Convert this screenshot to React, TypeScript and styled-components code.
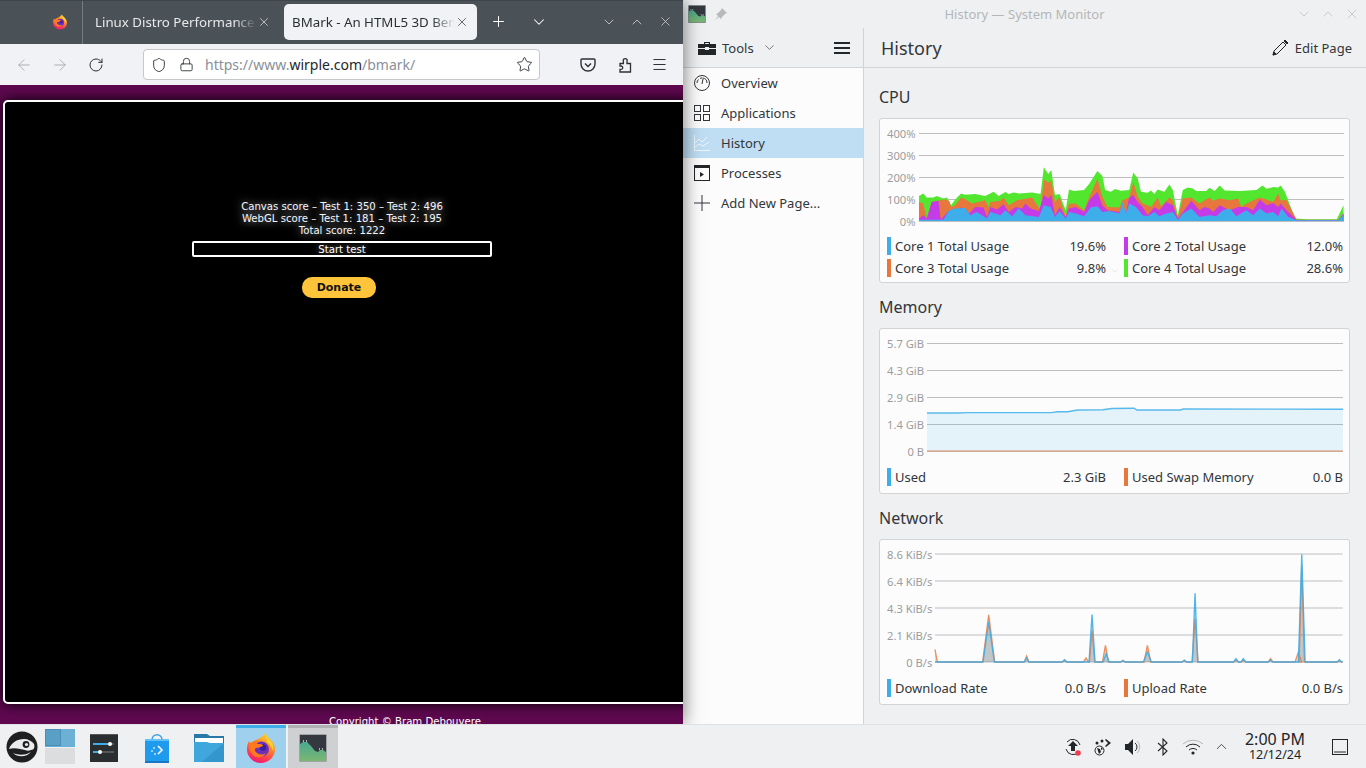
import React from "react";
import styled, { createGlobalStyle } from "styled-components";
import { ArrowLeft, ArrowRight, ChevronDown, ChevronUp, Lock, Menu, Plus, RotateCw, Shield, Star, X } from "lucide-react";

const GlobalStyle = createGlobalStyle`
  html, body { margin: 0; padding: 0; height: 100%; overflow: hidden; }
  body { font-family: "Noto Sans", sans-serif; font-size: 13px; color: #31363b; background: #000; }
  * { box-sizing: border-box; }
`;

// chart data is traced from the screenshot, in 3x crop coordinates
const parse = (s: string) => s.trim().split(/\s+/).map((p) => p.split(",").map(Number));

const GREEN = "132,258 145,250 155,262 175,262 185,258 205,265 215,262 228,285 240,268 258,250 270,254 300,252 330,258 355,245 370,258 390,246 400,252 415,247 430,250 470,247 495,252 505,172 518,192 527,180 538,255 552,252 570,300 580,238 595,243 625,240 640,222 665,183 680,198 688,240 705,245 718,237 735,242 760,240 772,188 785,205 795,245 815,248 825,241 835,252 845,238 865,245 880,223 890,240 905,315 920,240 935,232 950,235 960,243 990,243 1000,233 1015,243 1030,226 1045,241 1090,243 1140,240 1158,226 1170,236 1190,231 1205,232 1212,226 1225,245 1255,325 1290,327 1380,327 1400,285";
const ORANGE = "132,275 145,280 155,325 170,275 190,272 205,268 222,272 228,290 240,285 258,262 272,268 290,280 330,270 340,292 345,275 375,272 385,262 400,285 425,270 470,262 495,300 505,208 518,218 527,212 538,275 552,262 570,318 580,280 600,280 625,300 640,262 665,206 680,260 695,290 730,292 740,270 760,262 772,216 785,260 800,280 815,285 825,290 845,262 855,288 880,262 890,270 905,322 920,265 945,262 970,280 985,270 1000,262 1010,272 1030,265 1060,270 1085,265 1095,290 1110,280 1150,262 1170,268 1190,275 1205,250 1212,270 1230,270 1260,328 1385,328 1400,310";
const PURPLE = "132,325 145,315 155,325 170,275 190,272 197,328 222,300 240,300 258,292 272,296 282,310 300,290 325,292 335,320 345,290 365,298 385,282 400,305 420,290 440,295 450,280 465,295 490,302 505,255 518,265 527,255 538,315 552,290 570,320 580,295 600,290 625,305 640,270 665,245 680,285 695,300 730,305 740,285 750,310 760,262 772,255 785,275 800,290 815,315 835,290 850,300 870,275 890,285 905,325 920,305 945,272 970,300 985,290 1000,295 1010,305 1030,285 1060,300 1085,290 1110,290 1130,300 1150,268 1170,285 1190,278 1205,290 1212,280 1230,300 1260,329 1385,329 1400,310";
const BLUE = "132,328 205,328 222,300 240,295 270,293 285,315 305,305 335,325 345,305 375,315 390,300 410,318 430,295 450,315 490,320 505,285 525,290 538,320 552,302 570,325 580,305 600,310 625,318 645,292 665,288 680,305 700,302 730,310 740,275 750,310 760,280 780,290 800,315 815,318 835,305 850,318 870,310 890,305 905,328 920,310 945,295 970,320 1000,315 1020,318 1040,300 1060,295 1080,318 1110,300 1130,315 1150,295 1170,310 1190,305 1205,318 1215,295 1235,320 1260,330 1385,330 1400,315";
const MEMORY = "0,70 30,70 40,69.6 124,69.6 130,68.7 140,68.7 150,67 175,66.8 184,65.5 206,65.2 209,67 252,67 255,66 414,66.3";

const toPlot = (pts: number[][], x0: number, x1: number, y0: number, y1: number) =>
  pts.map(([x, y]) => `${(((x - x0) / (x1 - x0)) * 424).toFixed(1)},${(((y - y0) / (y1 - y0)) * 88).toFixed(1)}`).join(" ");

const cpuArea = (s: string) => `${toPlot(parse(s), 132, 1400, 70, 332)} 424,88 0,88`;

// [x, height, half width] peaks in crop coords, baseline y=368
const spikes = (peaks: number[][], first: number) => {
  const pts: string[] = [`185,${368 - first}`, "192,368"];
  peaks.forEach(([x, h, half]) => {
    const hw = half ?? 7;
    pts.push(`${x - hw},368`, `${x},${368 - h}`, `${x + hw},368`);
  });
  pts.push("1400,368");
  return pts.join(" ");
};
const NET_BLUE: number[][] = [[345, 120, 17], [458, 12], [571, 7], [653, 143, 9], [695, 25, 9], [745, 4], [818, 30, 12], [928, 6], [960, 207, 8], [1082, 10], [1104, 10], [1185, 6], [1278, 324, 10], [1390, 7]];
const NET_ORANGE: number[][] = [[345, 142, 18], [458, 18], [571, 5], [635, 12, 8], [653, 95, 8], [693, 50, 9], [745, 5], [818, 50, 10], [928, 4], [960, 130, 9], [1082, 6], [1104, 6], [1185, 10], [1268, 30, 10], [1278, 290, 8], [1390, 3]];

const Desktop = styled.div`
  width: 1366px;
  height: 768px;
  display: flex;
  flex-direction: column;
  overflow: hidden;
`;
const Windows = styled.div`
  flex: 1;
  min-height: 0;
  display: flex;
`;
const Browser = styled.div`
  width: 683px;
  flex: none;
  display: flex;
  flex-direction: column;
  position: relative;
  z-index: 2;
  box-shadow: 0 0 18px rgba(0, 0, 0, 0.55);
`;
const TabBar = styled.div`
  height: 44px;
  flex: none;
  background: #4a5258;
  border-top: 1px solid #3e464c;
  display: flex;
  align-items: center;
  color: #fff;
`;
const TabIconSlot = styled.div`
  width: 83px;
  align-self: stretch;
  flex: none;
  border-right: 1px solid #767c81;
  display: flex;
  align-items: center;
  justify-content: flex-end;
  padding: 0 14px 2px 0;
`;
const Tab = styled.div<{ $active?: boolean }>`
  width: ${(p) => (p.$active ? 193 : 201)}px;
  height: 36px;
  flex: none;
  margin-top: -2px;
  display: flex;
  align-items: center;
  border-radius: 5px;
  padding: 0 8px 0 ${(p) => (p.$active ? 8 : 12)}px;
  background: ${(p) => (p.$active ? "#f0f2f5" : "transparent")};
  color: ${(p) => (p.$active ? "#2c3034" : "#e6e8ea")};
`;
const TabTitle = styled.span`
  flex: 1;
  overflow: hidden;
  white-space: nowrap;
  font-size: 13.3px;
  -webkit-mask-image: linear-gradient(to right, #000 86%, transparent);
  mask-image: linear-gradient(to right, #000 86%, transparent);
`;
const TabButton = styled.div<{ $w: number }>`
  width: ${(p) => p.$w}px;
  flex: none;
  display: flex;
  justify-content: center;
  align-items: center;
  margin-top: -2px;
`;
const BrowserControls = styled.div`
  margin-left: auto;
  padding-right: 4px;
  display: flex;
  color: #dfe2e4;
`;
const NavBar = styled.div`
  height: 41px;
  flex: none;
  background: #f0f2f5;
  display: flex;
  align-items: center;
  padding-left: 14px;
  color: #2c3034;
`;
const NavIcon = styled.div<{ $w?: number; $muted?: boolean; $ml?: number; $mr?: number }>`
  width: ${(p) => p.$w ?? 36}px;
  flex: none;
  margin-left: ${(p) => p.$ml ?? 0}px;
  margin-right: ${(p) => p.$mr ?? 0}px;
  display: flex;
  justify-content: center;
  align-items: center;
  color: ${(p) => (p.$muted ? "#a0a4a8" : "#2c3034")};
`;
const UrlBar = styled.div`
  width: 397px;
  height: 31px;
  flex: none;
  margin-left: 37px;
  margin-right: 29px;
  background: #fff;
  border: 1px solid #c5c7c9;
  border-radius: 4px;
  display: flex;
  align-items: center;
  padding: 0 6px 0 5px;
`;
const UrlText = styled.span`
  flex: 1;
  font-size: 14px;
  color: #8a9099;
  white-space: nowrap;
  b { font-weight: 400; color: #23272b; }
`;
const WebPage = styled.div`
  flex: 1;
  min-height: 0;
  background: #5f0850;
  padding: 15px 0 0 3px;
  overflow: hidden;
`;
const Canvas = styled.div`
  width: 690px;
  height: 604px;
  background: #000;
  border: 2px solid #fff;
  border-radius: 5px;
  box-shadow: 0 0 14px #000;
  padding: 99px 0 0 187px;
  display: flex;
  flex-direction: column;
  font-family: "DejaVu Sans", sans-serif;
  color: #fff;
`;
const Scores = styled.div`
  width: 300px;
  font-size: 10.15px;
  line-height: 12px;
  text-align: center;
  color: #f4f6ff;
  text-shadow: 0 0 8px rgba(255, 255, 255, 0.75);
`;
const StartButton = styled.div`
  width: 300px;
  height: 16px;
  margin-top: 4px;
  border: 2px solid #fff;
  border-radius: 2px;
  font-size: 10.15px;
  line-height: 13px;
  text-align: center;
  text-shadow: 0 0 6px rgba(255, 255, 255, 0.6);
`;
const Donate = styled.div`
  width: 74px;
  height: 21px;
  margin: 20px 0 0 110px;
  background: #ffc439;
  border-radius: 10px;
  color: #111;
  font-size: 11px;
  font-weight: 700;
  line-height: 22px;
  text-align: center;
`;
const Copyright = styled.div`
  margin: 12px 0 0 326px;
  font-size: 10.15px;
  color: #fff;
  font-family: "DejaVu Sans", sans-serif;
  white-space: nowrap;
`;

const Monitor = styled.div`
  flex: 1;
  min-width: 0;
  background: #eff0f1;
  display: flex;
  flex-direction: column;
`;
const TitleBar = styled.div`
  height: 28px;
  flex: none;
  display: flex;
  align-items: center;
  padding: 0 0 0 5px;
  color: #b4b7b9;
`;
const TitleText = styled.div`
  flex: 1;
  text-align: center;
  font-size: 13px;
  padding-left: 26px;
`;
const WinControls = styled.div`
  display: flex;
  gap: 8px;
  padding-right: 6px;
  color: #b4b7b9;
`;
const MonitorBody = styled.div`
  flex: 1;
  min-height: 0;
  display: flex;
`;
const Sidebar = styled.div`
  width: 181px;
  flex: none;
  background: #fcfcfc;
  border-right: 1px solid #d2d3d5;
  display: flex;
  flex-direction: column;
`;
const SideTools = styled.div`
  height: 40px;
  flex: none;
  background: #eff0f1;
  border-bottom: 1px solid #d2d3d5;
  display: flex;
  align-items: center;
  padding: 0 13px 0 15px;
  gap: 6px;
  font-size: 13px;
`;
const NavItem = styled.div<{ $active?: boolean }>`
  height: 30px;
  flex: none;
  display: flex;
  align-items: center;
  gap: 11px;
  padding-left: 11px;
  font-size: 13px;
  background: ${(p) => (p.$active ? "#bfdef3" : "transparent")};
`;
const Main = styled.div`
  flex: 1;
  min-width: 0;
  display: flex;
  flex-direction: column;
`;
const MainHeader = styled.div`
  height: 40px;
  flex: none;
  border-bottom: 1px solid #d2d3d5;
  display: flex;
  align-items: center;
  justify-content: space-between;
  padding: 0 14px 0 17px;
`;
const PageTitle = styled.div`
  font-size: 18px;
`;
const EditPage = styled.div`
  display: flex;
  align-items: center;
  gap: 7px;
  font-size: 13px;
`;
const Sections = styled.div`
  flex: 1;
  padding: 18px 16px 0 15px;
  display: flex;
  flex-direction: column;
`;
const SectionTitle = styled.div`
  height: 22px;
  line-height: 22px;
  font-size: 16px;
  margin-bottom: 10px;
`;
const Card = styled.div<{ $pb: number }>`
  background: #fcfcfc;
  border: 1px solid #d2d3d5;
  border-radius: 3px;
  padding: 6px 6px ${(p) => p.$pb}px 7px;
  margin-bottom: 13px;
  position: relative;
`;
const ChartRow = styled.div<{ $h: number }>`
  height: ${(p) => p.$h}px;
  display: flex;
  gap: 3px;
`;
const Axis = styled.div`
  margin: 1px 0 -1px;
  display: flex;
  flex-direction: column;
  justify-content: space-between;
  align-items: flex-end;
  flex: none;
  font-size: 11.2px;
  line-height: 16px;
  color: #9a9c9f;
`;
const Plot = styled.div`
  flex: 1;
  min-width: 0;
  padding: 8px 0;
  svg { display: block; width: 100%; height: 100%; overflow: visible; }
`;
const Legend = styled.div<{ $mt: number }>`
  margin-top: ${(p) => p.$mt}px;
  display: grid;
  grid-template-columns: 219px 219px;
  column-gap: 18px;
  grid-auto-rows: 22px;
`;
const LegendItem = styled.div`
  display: flex;
  align-items: center;
  font-size: 13px;
  justify-content: space-between;
`;
const LegendName = styled.span<{ $color: string }>`
  display: flex;
  align-items: center;
  gap: 4px;
  &::before {
    content: "";
    width: 4px;
    height: 18px;
    background: ${(p) => p.$color};
  }
`;
const TinyChevron = styled.div`
  position: absolute;
  left: 230px;
  bottom: 6px;
  color: #c4c6c8;
  display: flex;
`;

const Taskbar = styled.div`
  height: 44px;
  flex: none;
  background: #eff0f1;
  border-top: 1px solid #dfe0e2;
  display: flex;
  align-items: stretch;
  position: relative;
  z-index: 3;
`;
const Launcher = styled.div`
  width: 44px;
  flex: none;
  display: flex;
  align-items: center;
  justify-content: center;
`;
const Pager = styled.div`
  width: 30px;
  flex: none;
  margin: 4px 0 4px 1px;
  display: grid;
  grid-template-rows: 1fr 1fr;
`;
const PagerTop = styled.div`
  display: flex;
  border-bottom: 1px solid #64b0d8;
  background: #6db0d6;
`;
const PagerWin = styled.div`
  width: 16px;
  background: #5a9fc6;
  border: 1px solid #4b8db3;
`;
const PagerBottom = styled.div`
  background: #dcdddf;
  margin-top: 1px;
`;
const TaskSlot = styled.div<{ $w: number; $bg?: string; $bar?: string; $ml?: number }>`
  width: ${(p) => p.$w}px;
  flex: none;
  margin-left: ${(p) => p.$ml ?? 0}px;
  display: flex;
  align-items: center;
  justify-content: center;
  background: ${(p) => p.$bg ?? "transparent"};
  border-top: 3px solid ${(p) => p.$bar ?? "transparent"};
`;
const Tray = styled.div`
  margin-left: auto;
  display: flex;
  align-items: center;
  color: #232629;
`;
const TrayIcon = styled.div<{ $w: number }>`
  width: ${(p) => p.$w}px;
  flex: none;
  display: flex;
  justify-content: center;
`;
const Clock = styled.div`
  width: 78px;
  margin-left: 2px;
  text-align: center;
  color: #232629;
`;
const ClockTime = styled.div`
  font-size: 16px;
  line-height: 17px;
`;
const ClockDate = styled.div`
  font-size: 12.5px;
  line-height: 14px;
`;
const ShowDesktop = styled.div`
  width: 52px;
  flex: none;
  display: flex;
  justify-content: center;
`;
const IconWrap = styled.span<{ $ml?: number }>`
  display: flex;
  margin-left: ${(p) => (p.$ml === undefined ? "auto" : `${p.$ml}px`)};
`;

const Firefox = ({ size, id }: { size: number; id: string }) => (
  <svg width={size} height={size} viewBox="0 0 32 32">
    <defs>
      <linearGradient id={`${id}a`} x1="0.7" y1="0" x2="0.3" y2="1">
        <stop offset="0" stopColor="#ffd52e" />
        <stop offset="0.4" stopColor="#ff8a2a" />
        <stop offset="0.8" stopColor="#ff3256" />
        <stop offset="1" stopColor="#e9197c" />
      </linearGradient>
    </defs>
    <path d="M20 1c1 3 3 4 5 6 3 3 5 6 5 11a14 14 0 1 1-28-2c0-3 1-5 2-7 1 1 1 2 2 3 1-2 3-3 5-4 2-1 6-3 9-7z" fill={`url(#${id}a)`} />
    <circle cx="16.5" cy="17" r="7.5" fill="#6b2fb8" />
    <circle cx="18" cy="15.5" r="3.2" fill="#3a1f9c" />
    <path d="M4 12c3-3 7-4 11-3-2 1-3 2-3 3 3 0 6 0 6 2-3 1-5 2-7 2-2 1-1 4 1 5 3 2 6 2 9 0-2 4-8 6-12 3-3-2-5-7-5-12z" fill="#ff7a1f" />
    <path d="M21 3c1 3 4 5 6 8 1 2 2 5 1 8-1-4-3-7-6-9 0-2-1-4-1-7z" fill="#ffd52e" />
  </svg>
);

const MonitorIcon = ({ size }: { size: number }) => (
  <svg width={size} height={size} viewBox="0 0 28 28">
    <defs>
      <linearGradient id={`sm${size}`} x1="0" y1="0" x2="0" y2="1">
        <stop offset="0" stopColor="#48a98f" />
        <stop offset="1" stopColor="#7cb672" />
      </linearGradient>
    </defs>
    <rect x="0.5" y="0.5" width="27" height="27" rx="1" fill="#33393e" stroke="#a0a4a7" strokeWidth="1" />
    <path d="M1 27V10l3-2h4l4 4 4 5 3 1 2-2h3l3 2v9z" fill={`url(#sm${size})`} />
    <path d="M4 7h1M7 7h1M20 15h1M23 15h1" stroke="#d6dadd" strokeWidth="1.5" />
  </svg>
);

const Suse = () => (
  <svg width="32" height="32" viewBox="0 0 32 32">
    <circle cx="16" cy="16" r="15.5" fill="#1d1f21" />
    <path d="M3 18c2-6 8-10 15-10 4 0 8 2 10 5 1 3 0 6-3 6-2 1-4 1-6 0l-5-1c-4-1-8-1-11 0z" fill="#ececec" />
    <circle cx="20" cy="13.5" r="3.4" fill="#1d1f21" />
    <circle cx="20.5" cy="13.5" r="1.6" fill="#ececec" />
    <path d="M7 22c5 2 11 3 18-1-4 5-13 6-18 1z" fill="#ececec" />
  </svg>
);

const SettingsIcon = () => (
  <svg width="28" height="28" viewBox="0 0 28 28">
    <rect width="28" height="28" fill="#2b2e31" />
    <rect width="28" height="1" fill="#55585b" />
    <rect x="3" y="9" width="21" height="2" fill="#55585b" />
    <rect x="3" y="9" width="17" height="2" fill="#3daee9" />
    <circle cx="20" cy="10" r="2" fill="#fff" />
    <rect x="3" y="17" width="21" height="2" fill="#55585b" />
    <rect x="3" y="17" width="7" height="2" fill="#3daee9" />
    <circle cx="10" cy="18" r="2" fill="#fff" />
  </svg>
);

const DiscoverIcon = () => (
  <svg width="26" height="30" viewBox="0 0 26 30">
    <path d="M8 7c0-7 10-7 10 0" fill="none" stroke="#3aa0e0" strokeWidth="1.5" />
    <rect x="1" y="6" width="24" height="24" fill="#1f9bee" />
    <rect x="1" y="6" width="24" height="2" fill="#63c0f5" />
    <rect x="1" y="28" width="24" height="2" fill="#1878c4" />
    <path d="M14 13l4 4-4 4" fill="none" stroke="#fff" strokeWidth="1.6" />
    <circle cx="10" cy="15" r="1" fill="#bfe6ff" />
    <circle cx="8" cy="18" r="1" fill="#bfe6ff" />
    <circle cx="11" cy="21" r="1" fill="#bfe6ff" />
  </svg>
);

const FolderIcon = () => (
  <svg width="30" height="30" viewBox="0 0 30 30">
    <path d="M0 1h13l3 2h14v26H0z" fill="#2a78a8" />
    <rect x="1" y="5" width="28" height="5" fill="#fff" />
    <path d="M0 29V9h13l3 1h14v19z" fill="#3fa7dc" />
    <path d="M30 10v19H8z" fill="#2f8fc4" opacity="0.7" />
  </svg>
);

const thin = { fill: "none", stroke: "currentColor", strokeWidth: 1 } as const;

const ToolboxIcon = () => (
  <svg width="18" height="14" viewBox="0 0 18 14" fill="#232629">
    <path d="M6 3V1h6v2h-1.2V2H7.2v1z" />
    <path d="M0 3h18v4H11V6H7v1H0zM0 8h7v1h4V8h7v6H0z" />
  </svg>
);
const OverviewIcon = () => (
  <svg width="16" height="16" viewBox="0 0 16 16" {...thin}>
    <circle cx="8" cy="8" r="7.5" />
    <path d="M3 8a5 5 0 0 1 1.5-3.5M6 3.4A5 5 0 0 1 8 3M8.5 3A5 5 0 0 1 13 8M8 9l1-5" />
  </svg>
);
const AppsIcon = () => (
  <svg width="16" height="16" viewBox="0 0 16 16" {...thin}>
    <rect x="0.5" y="0.5" width="6" height="6" />
    <rect x="9.5" y="0.5" width="6" height="6" />
    <rect x="0.5" y="9.5" width="6" height="6" />
    <rect x="9.5" y="9.5" width="6" height="6" />
  </svg>
);
const HistoryIcon = () => (
  <svg width="16" height="16" viewBox="0 0 16 16" fill="none" stroke="#eef5fa" strokeWidth="1">
    <path d="M0.5 0v15.5H16M1 8l4-4 3 3 5-5M1 12l4-3 4 2 6-4" />
  </svg>
);
const ProcessesIcon = () => (
  <svg width="16" height="16" viewBox="0 0 16 16">
    <rect x="0.5" y="0.5" width="15" height="15" fill="none" stroke="#232629" />
    <rect x="0" y="0" width="16" height="3" fill="#232629" />
    <path d="M6 7l4 2.5L6 12z" fill="#232629" />
  </svg>
);
const PlusIcon = () => (
  <svg width="16" height="16" viewBox="0 0 16 16" {...thin}>
    <path d="M8 0v16M0 8h16" />
  </svg>
);
const Hamburger = () => (
  <svg width="16" height="12" viewBox="0 0 16 12" fill="#232629">
    <rect width="16" height="2" />
    <rect y="5" width="16" height="2" />
    <rect y="10" width="16" height="2" />
  </svg>
);
const Pin = () => (
  <svg width="12" height="12" viewBox="0 0 12 12" fill="#b7babc">
    <path d="M7 0l5 5-2 1-3 3-1 2-5-5 2-1 3-3z" />
    <path d="M3 8l-3 4 4-3z" />
  </svg>
);
const Pencil = () => (
  <svg width="16" height="16" viewBox="0 0 16 16" fill="none" stroke="#232629">
    <path d="M1 15l1-4L11 2l3 3-9 9z" />
    <path d="M12 1l3 3 1-1-3-3z" fill="#232629" />
    <path d="M1 15l1-3 2 2z" fill="#232629" />
  </svg>
);
const Pocket = () => (
  <svg width="16" height="16" viewBox="0 0 16 16" fill="none" stroke="#2c3034" strokeWidth="1.4">
    <path d="M2 2h12a1 1 0 0 1 1 1v4a7 7 0 0 1-14 0V3a1 1 0 0 1 1-1z" />
    <path d="M5 6.5l3 3 3-3" />
  </svg>
);
const Extension = () => (
  <svg width="16" height="16" viewBox="0 0 16 16" fill="none" stroke="#2c3034" strokeWidth="1.3">
    <path d="M3 15h10.5V6.5H10V4.4a2 2 0 1 0-3.6 0v2.1H3V9h1a1.7 1.7 0 1 1 0 3.4H3z" />
  </svg>
);
const TrayUpdate = () => (
  <svg width="18" height="18" viewBox="0 0 18 18">
    <path d="M3 4A7.5 7.5 0 0 1 16 7M15 14A7.5 7.5 0 0 1 2 11" fill="none" stroke="#232629" />
    <path d="M9 3l5 5h-3v5H7V8H4z" fill="#232629" />
    <circle cx="14" cy="15" r="2.8" fill="#ed3e4f" />
  </svg>
);
const TrayConnect = () => (
  <svg width="18" height="18" viewBox="0 0 18 18" fill="#232629">
    <circle cx="5.5" cy="12.5" r="4.5" fill="none" stroke="#232629" />
    <path d="M3 10l3 1 1 3-2 2-1-3zM7 9l2 2-2 1z" />
    <circle cx="3" cy="5" r="1.5" />
    <circle cx="8" cy="3" r="1.5" />
    <path d="M12 1l5 4-5 4 -1-1 3-3-3-3z" />
  </svg>
);
const TrayVolume = () => (
  <svg width="18" height="18" viewBox="0 0 18 18">
    <path d="M1 6h3l5-5v16l-5-5H1z" fill="#232629" />
    <path d="M11 5a5 5 0 0 1 0 8" fill="none" stroke="#232629" />
    <path d="M13 3a8 8 0 0 1 0 12" fill="none" stroke="#b4b6b8" />
  </svg>
);
const TrayBluetooth = () => (
  <svg width="12" height="18" viewBox="0 0 12 18" fill="none" stroke="#232629" strokeWidth="1.1">
    <path d="M1 5l9 8-4 4V1l4 4-9 8" />
  </svg>
);
const TrayWifi = () => (
  <svg width="22" height="16" viewBox="0 0 22 16" fill="none">
    <path d="M1 5a15 15 0 0 1 20 0" stroke="#b4b6b8" />
    <path d="M4 8a10 10 0 0 1 14 0M7 11a6 6 0 0 1 8 0" stroke="#232629" />
    <circle cx="11" cy="14" r="1.6" fill="#232629" />
  </svg>
);
const ShowDesktopIcon = () => (
  <svg width="16" height="16" viewBox="0 0 16 16" {...thin} stroke="#232629">
    <rect x="0.5" y="0.5" width="15" height="15" />
    <path d="M2 13h12" />
  </svg>
);

const Grid = ({ lines, x0, w, y0, h, sw }: { lines: number; x0: number; w: number; y0: number; h: number; sw: number }) => (
  <g shapeRendering="crispEdges">
    {Array.from({ length: lines }).map((_, i) => {
      const y = y0 + (h / (lines - 1)) * i;
      return <line key={i} x1={x0} x2={x0 + w} y1={y} y2={y} stroke="#bcbec0" strokeWidth={sw} />;
    })}
  </g>
);

const CpuPlot = () => (
  <svg viewBox="0 0 424 88" preserveAspectRatio="none">
    <Grid lines={5} x0={0} w={424} y0={0} h={88} sw={1} />
    <polygon points={cpuArea(GREEN)} fill="#52e62f" />
    <polygon points={cpuArea(ORANGE)} fill="#e8773d" />
    <polygon points={cpuArea(PURPLE)} fill="#c63be8" />
    <polygon points={cpuArea(BLUE)} fill="#3daee9" />
  </svg>
);

const MemoryPlot = () => (
  <svg viewBox="0 0 414 108" preserveAspectRatio="none">
    <Grid lines={5} x0={0} w={414} y0={0} h={108} sw={1} />
    <polygon points={`${MEMORY} 414,108 0,108`} fill="rgba(61,174,233,0.12)" />
    <polyline points={MEMORY} fill="none" stroke="#3daee9" strokeWidth="1.4" opacity="0.85" />
    <line x1={0} x2={414} y1={108} y2={108} stroke="#e0906a" strokeWidth={1} />
  </svg>
);

const NetworkPlot = () => {
  const orange = spikes(NET_ORANGE, 38);
  const blue = spikes(NET_BLUE, 0);
  return (
    <svg viewBox="185 43 1215 325" preserveAspectRatio="none">
      <Grid lines={5} x0={185} w={1215} y0={43} h={325} sw={3} />
      <polygon points={`${orange} 185,368`} fill="rgba(120,110,100,0.2)" />
      <polygon points={`${blue} 185,368`} fill="rgba(80,110,130,0.22)" />
      <polyline points={orange} fill="none" stroke="#e8773d" strokeWidth="4" opacity="0.8" />
      <polyline points={blue} fill="none" stroke="#3daee9" strokeWidth="4" opacity="0.9" />
    </svg>
  );
};

type Row = { color: string; name: string; value: string };

const Sensor = ({ title, axis, rows, height, plot, extra, mt, pb }: { title: string; axis: string[]; rows: Row[]; height: number; plot: React.ReactNode; extra?: React.ReactNode; mt: number; pb: number }) => (
  <>
    <SectionTitle>{title}</SectionTitle>
    <Card $pb={pb}>
      <ChartRow $h={height}>
        <Axis>
          {axis.map((a) => (
            <span key={a}>{a}</span>
          ))}
        </Axis>
        <Plot>{plot}</Plot>
      </ChartRow>
      <Legend $mt={mt}>
        {rows.map((r) => (
          <LegendItem key={r.name}>
            <LegendName $color={r.color}>{r.name}</LegendName>
            <span>{r.value}</span>
          </LegendItem>
        ))}
      </Legend>
      {extra}
    </Card>
  </>
);

const App = () => {
  return (
    <Desktop>
      <GlobalStyle />
      <Windows>
        <Browser>
          <TabBar>
            <TabIconSlot>
              <Firefox size={16} id="fxs" />
            </TabIconSlot>
            <Tab>
              <TabTitle>Linux Distro Performance Test</TabTitle>
              <X size={14} strokeWidth={1.2} style={{ marginRight: 5 }} />
            </Tab>
            <Tab $active>
              <TabTitle>BMark - An HTML5 3D Benchmark</TabTitle>
              <X size={14} strokeWidth={1.2} />
            </Tab>
            <TabButton $w={42}>
              <Plus size={17} strokeWidth={1.4} />
            </TabButton>
            <TabButton $w={40}>
              <ChevronDown size={18} strokeWidth={1.4} />
            </TabButton>
            <BrowserControls>
              <TabButton $w={28}>
                <ChevronDown size={16} strokeWidth={1.1} />
              </TabButton>
              <TabButton $w={28}>
                <ChevronUp size={16} strokeWidth={1.1} />
              </TabButton>
              <TabButton $w={28}>
                <X size={15} strokeWidth={1.1} />
              </TabButton>
            </BrowserControls>
          </TabBar>
          <NavBar>
            <NavIcon $w={20} $muted>
              <ArrowLeft size={18} strokeWidth={1.1} />
            </NavIcon>
            <NavIcon $w={20} $ml={16} $muted>
              <ArrowRight size={18} strokeWidth={1.1} />
            </NavIcon>
            <NavIcon $w={20} $ml={16}>
              <RotateCw size={16} strokeWidth={1.5} />
            </NavIcon>
            <UrlBar>
              <NavIcon $w={20}>
                <Shield size={16} strokeWidth={1.4} />
              </NavIcon>
              <NavIcon $w={16} $ml={9} $mr={11}>
                <Lock size={15} strokeWidth={1.4} />
              </NavIcon>
              <UrlText>
                https://www.<b>wirple.com</b>/bmark/
              </UrlText>
              <Star size={17} strokeWidth={1.3} color="#2c3034" />
            </UrlBar>
            <NavIcon $w={37}>
              <Pocket />
            </NavIcon>
            <NavIcon $w={37}>
              <Extension />
            </NavIcon>
            <NavIcon $w={33}>
              <Menu size={17} strokeWidth={1.4} />
            </NavIcon>
          </NavBar>
          <WebPage>
            <Canvas>
              <Scores>
                <div>Canvas score – Test 1: 350 – Test 2: 496</div>
                <div>WebGL score – Test 1: 181 – Test 2: 195</div>
                <div>Total score: 1222</div>
              </Scores>
              <StartButton>Start test</StartButton>
              <Donate>Donate</Donate>
            </Canvas>
            <Copyright>Copyright © Bram Debouvere</Copyright>
          </WebPage>
        </Browser>

        <Monitor>
          <TitleBar>
            <MonitorIcon size={18} />
            <IconWrap $ml={9}>
              <Pin />
            </IconWrap>
            <TitleText>History — System Monitor</TitleText>
            <WinControls>
              <ChevronDown size={16} strokeWidth={1} />
              <ChevronUp size={16} strokeWidth={1} />
              <X size={16} strokeWidth={1} />
            </WinControls>
          </TitleBar>
          <MonitorBody>
            <Sidebar>
              <SideTools>
                <ToolboxIcon />
                <span>Tools</span>
                <ChevronDown size={15} strokeWidth={1} style={{ marginLeft: 2 }} />
                <IconWrap>
                  <Hamburger />
                </IconWrap>
              </SideTools>
              <NavItem><OverviewIcon />Overview</NavItem>
              <NavItem><AppsIcon />Applications</NavItem>
              <NavItem $active><HistoryIcon />History</NavItem>
              <NavItem><ProcessesIcon />Processes</NavItem>
              <NavItem><PlusIcon />Add New Page...</NavItem>
            </Sidebar>
            <Main>
              <MainHeader>
                <PageTitle>History</PageTitle>
                <EditPage>
                  <Pencil />
                  Edit Page
                </EditPage>
              </MainHeader>
              <Sections>
                <Sensor
                  title="CPU"
                  height={104}
                  mt={6}
                  pb={3}
                  axis={["400%", "300%", "200%", "100%", "0%"]}
                  plot={<CpuPlot />}
                  rows={[
                    { color: "#3daee9", name: "Core 1 Total Usage", value: "19.6%" },
                    { color: "#c63be8", name: "Core 2 Total Usage", value: "12.0%" },
                    { color: "#e8773d", name: "Core 3 Total Usage", value: "9.8%" },
                    { color: "#52e62f", name: "Core 4 Total Usage", value: "28.6%" },
                  ]}
                  extra={
                    <TinyChevron>
                      <ChevronDown size={10} strokeWidth={1} />
                    </TinyChevron>
                  }
                />
                <Sensor
                  title="Memory"
                  height={124}
                  mt={7}
                  pb={5}
                  axis={["5.7 GiB", "4.3 GiB", "2.9 GiB", "1.4 GiB", "0 B"]}
                  plot={<MemoryPlot />}
                  rows={[
                    { color: "#3daee9", name: "Used", value: "2.3 GiB" },
                    { color: "#e8773d", name: "Used Swap Memory", value: "0.0 B" },
                  ]}
                />
                <Sensor
                  title="Network"
                  height={124}
                  mt={7}
                  pb={5}
                  axis={["8.6 KiB/s", "6.4 KiB/s", "4.3 KiB/s", "2.1 KiB/s", "0 B/s"]}
                  plot={<NetworkPlot />}
                  rows={[
                    { color: "#3daee9", name: "Download Rate", value: "0.0 B/s" },
                    { color: "#e8773d", name: "Upload Rate", value: "0.0 B/s" },
                  ]}
                />
              </Sections>
            </Main>
          </MonitorBody>
        </Monitor>
      </Windows>

      <Taskbar>
        <Launcher>
          <Suse />
        </Launcher>
        <Pager>
          <PagerTop>
            <PagerWin />
          </PagerTop>
          <PagerBottom />
        </Pager>
        <TaskSlot $w={56} $ml={1}><SettingsIcon /></TaskSlot>
        <TaskSlot $w={50}><DiscoverIcon /></TaskSlot>
        <TaskSlot $w={54}><FolderIcon /></TaskSlot>
        <TaskSlot $w={50} $bg="#9fd0ee" $bar="#3daee9"><Firefox size={32} id="fxl" /></TaskSlot>
        <TaskSlot $w={50} $bg="#cfd0d1" $bar="#b0b1b2" $ml={2}><MonitorIcon size={28} /></TaskSlot>
        <Tray>
          <TrayIcon $w={30}><TrayUpdate /></TrayIcon>
          <TrayIcon $w={29}><TrayConnect /></TrayIcon>
          <TrayIcon $w={31}><TrayVolume /></TrayIcon>
          <TrayIcon $w={30}><TrayBluetooth /></TrayIcon>
          <TrayIcon $w={30}><TrayWifi /></TrayIcon>
          <TrayIcon $w={26}><ChevronUp size={17} strokeWidth={1.1} /></TrayIcon>
          <Clock>
            <ClockTime>2:00 PM</ClockTime>
            <ClockDate>12/12/24</ClockDate>
          </Clock>
          <ShowDesktop><ShowDesktopIcon /></ShowDesktop>
        </Tray>
      </Taskbar>
    </Desktop>
  );
};

export default App;
